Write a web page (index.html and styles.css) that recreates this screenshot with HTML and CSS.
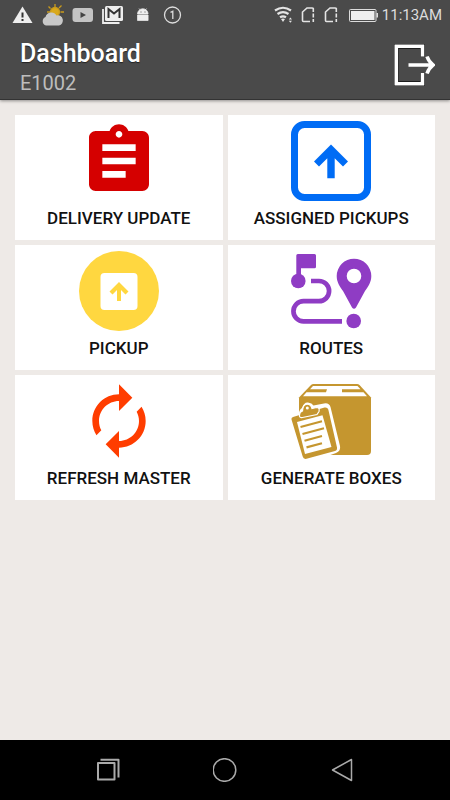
FILE: index.html
```
<!DOCTYPE html>
<html lang="en">
<head>
<meta charset="utf-8">
<meta name="viewport" content="width=device-width, initial-scale=1">
<title>Dashboard</title>
<link rel="stylesheet" href="styles.css">
</head>
<body>
<div class="screen">
  <header class="top">
    <div class="status">
      <div class="status-left">
        <svg class="note" viewBox="0 0 30 30" aria-hidden="true"><path d="M14.500 6.500L24.500 23h-20z" fill="#eee"/><path d="M13.500 12.500h2v5h-2zm0 6.500h2v2h-2z" fill="#333"/></svg>
        <svg class="note" viewBox="0 0 30 30" aria-hidden="true"><g stroke="#c99b1c" stroke-width="1.300"><circle cx="17" cy="12" r="4.500" fill="#d9a91c"/><path d="M17 4v3M10.500 6.500l2 2M23.500 5.500l-2.500 2.500M22.500 12H26M21 16l2.500 2M9 12h3"/></g><path d="M8 25.500a4.500 4.500 0 0 1-.5-8.500 6 6 0 0 1 11-1.500 5 5 0 0 1 2.500 10z" fill="#c8c8c8"/></svg>
        <svg class="note" viewBox="0 0 30 30" aria-hidden="true"><rect x="4.500" y="8" width="20.500" height="14" rx="3" fill="#c4c4c4"/><path d="M12.500 12v6l5.500-3z" fill="#444"/></svg>
        <svg class="note" viewBox="0 0 30 30" aria-hidden="true"><path d="M5 9v14h16.500" fill="none" stroke="#eee" stroke-width="1.800"/><rect x="7" y="6" width="18" height="15" rx="1.500" fill="#eee"/><path d="M10.500 18V9l5.500 4.500L21.500 9v9" fill="none" stroke="#333" stroke-width="2"/></svg>
        <svg class="note" viewBox="0 0 30 30" aria-hidden="true"><path d="M9.500 14a5.300 5.300 0 0 1 10.600 0zM9.500 15h10.600v5.500H9.500zM11 8.500l1.800 2M18.600 8.500l-1.800 2" fill="#eee" stroke="#eee" stroke-width=".7"/><path d="M12.500 12h1M16.500 12h1" stroke="#555"/></svg>
        <svg class="note" viewBox="0 0 30 30" aria-hidden="true"><circle cx="14.500" cy="15" r="8" fill="none" stroke="#ddd" stroke-width="1.300"/><path d="M12.500 12.300l2.300-1V19" fill="none" stroke="#ddd" stroke-width="1.300"/></svg>
      </div>
      <div class="status-right">
        <svg width="18" height="30" viewBox="0 0 18 30" aria-hidden="true"><g fill="none" stroke="#e4e4e4" stroke-width="2.200"><path d="M1 10.500Q9 5 17 10.500M3.500 14Q9 10.300 14.500 14M6 17.300Q9 15.500 12 17.300"/></g><path d="M7 19q2-1.200 4 0L9 22zM14.800 19.500l1.600-2 1.600 2zM14.800 20.800l1.600 2 1.600-2z" fill="#e4e4e4"/></svg>
        <svg width="14" height="30" viewBox="0 0 14 30" aria-hidden="true"><path d="M12.300 12V8.500Q12 8 11 8H6L1.500 12v8.500q0 1 1 1H9M12.300 13.500v4M12.300 19v3" fill="none" stroke="#e4e4e4" stroke-width="1.600"/></svg>
        <svg width="14" height="30" viewBox="0 0 14 30" aria-hidden="true"><path d="M12.300 12V8.500Q12 8 11 8H6L1.500 12v8.500q0 1 1 1H9M12.300 13.500v4M12.300 19v3" fill="none" stroke="#e4e4e4" stroke-width="1.600"/></svg>
        <svg width="32" height="30" viewBox="-2 0 32 30" aria-hidden="true"><rect x=".5" y="9.500" width="26.500" height="12" rx="1" fill="none" stroke="#ddd"/><rect x="2" y="11" width="23.500" height="9" fill="#eee"/><path d="M27.500 13h1.500v4.500h-1.500z" fill="#ddd"/></svg>
        <span class="time">11:13AM</span>
      </div>
    </div>
    <div class="bar">
      <div>
        <h1 class="title">Dashboard</h1>
        <p class="user">E1002</p>
      </div>
      <button class="logout" type="button" aria-label="Log out">
        <svg width="41" height="42" viewBox="1 1 41 42" aria-hidden="true">
          <path d="M29.500 13.500V3.300H3.300v37.400h26.200V30" fill="none" stroke="#111" stroke-width="5"/>
          <path d="M29.500 13.500V3.300H3.300v37.400h26.200V30M15.500 22H39M34 13.500q2 5.500 6 8.500-4 3-6 8.500" fill="none" stroke="#fff" stroke-width="3.600"/>
        </svg>
      </button>
    </div>
  </header>

  <main class="grid">
    <button class="card" type="button">
      <svg class="icon" viewBox="0 0 24 24" fill="#d50000" aria-hidden="true"><path d="M19 3h-4.180C14.400 1.840 13.300 1 12 1c-1.300 0-2.400.84-2.820 2H5c-1.100 0-2 .9-2 2v14c0 1.100.9 2 2 2h14c1.100 0 2-.9 2-2V5c0-1.100-.9-2-2-2zm-7 0c.55 0 1 .45 1 1s-.45 1-1 1-1-.45-1-1 .45-1 1-1zm2 14H7v-2h7v2zm3-4H7v-2h10v2zm0-4H7V7h10v2z"/></svg>
      <span>DELIVERY UPDATE</span>
    </button>
    <button class="card" type="button">
      <svg class="icon" viewBox="0 0 80 80" aria-hidden="true"><rect x="3.500" y="3.500" width="73" height="73" rx="10" fill="none" stroke="#006cf5" stroke-width="7"/><path d="M40 23.500L57 40.500 52 45.500 43.700 37.300V57.300H36.300V37.300L28 45.500 23 40.500z" fill="#006cf5"/></svg>
      <span>ASSIGNED PICKUPS</span>
    </button>
    <button class="card" type="button">
      <svg class="icon" viewBox="0 0 80 80" aria-hidden="true"><circle cx="40" cy="40" r="40" fill="#ffd740"/><rect x="21.500" y="22" width="37" height="37" rx="4" fill="#fff"/><path d="M40 31L49.500 40.500 46.500 43.500 42 39V50H38V39L33.500 43.500 30.500 40.500z" fill="#ffd740"/></svg>
      <span>PICKUP</span>
    </button>
    <button class="card" type="button">
      <svg class="icon" viewBox="0 0 80 80" fill="#8f3cc4" aria-hidden="true"><path d="M5.300 30V4.500Q5.300 3 6.800 3H23.500Q25 3 25 4.500V15.800Q25 17.300 23.500 17.300H10V30z"/><circle cx="7.300" cy="30" r="7.300"/><circle cx="62.700" cy="70" r="7.300"/><path d="M20 30H28A10 10 0 0 1 28 50.200H12.500A10 10 0 0 0 12.500 70.300H51" fill="none" stroke="#8f3cc4" stroke-width="4.700"/><path fill-rule="evenodd" d="M63 7.700A17.300 17.300 0 0 1 80.300 25C80.300 31 77.500 35 74 40L65 56.500Q63 59 61 56.500L52 40C48.500 35 45.700 31 45.700 25A17.300 17.300 0 0 1 63 7.700zM63 17.700A7.300 7.300 0 1 0 63 32.300 7.300 7.300 0 0 0 63 17.700z"/></svg>
      <span>ROUTES</span>
    </button>
    <button class="card" type="button">
      <svg class="icon" viewBox="0 0 24 24" fill="#ff3d00" aria-hidden="true"><path d="M12 6v3l4-4-4-4v3c-4.420 0-8 3.580-8 8 0 1.570.46 3.030 1.240 4.260L6.700 14.800c-.45-.83-.7-1.790-.7-2.800 0-3.310 2.690-6 6-6zm6.760 1.740L17.300 9.200c.44.840.7 1.790.7 2.800 0 3.310-2.690 6-6 6v-3l-4 4 4 4v-3c4.420 0 8-3.580 8-8 0-1.570-.46-3.030-1.240-4.260z"/></svg>
      <span>REFRESH MASTER</span>
    </button>
    <button class="card" type="button">
      <svg class="icon" viewBox="0 0 80 80" fill="#c5962f" aria-hidden="true">
        <path d="M8 16.500L20 4Q21 3 22.500 3H66Q67.500 3 68.500 4L80 16.500V70Q80 74 76 74H12Q8 74 8 70z"/>
        <path d="M22 5H66.500L69.500 8.300H51V11.300H72.500L76 15.200H12L15.500 11.300H35L36 8.300H19z" fill="#fff"/>
        <path d="M-1 38Q-1 35 2 34L8 32.500Q8 29 11 27 13 21 17 21.500 21 22 22.500 24.500L33 22.500Q38 21.500 39.500 26L49 65Q50 70 45 72L38 74.500 15 80 9 78z" fill="#fff"/>
        <path d="M.5 38.500Q0 36.500 2 36L33.500 26.500Q36.500 26 37.300 28.500L46 66.500Q46.500 69 44 70L15.500 77.800Q12.500 78.500 11.700 75.500z"/>
        <path d="M6 41L31.500 34.300 40.500 66 14 73z" fill="#fff"/>
        <path d="M8.500 34Q8.500 31 11.500 30 12 23.200 16 23.200 20 23.200 21 27.500L25.500 26.500Q29 26.500 28 30.500L26 33.500 11.500 36.500Q8 37 8.500 34z" stroke="#fff" stroke-width="1.200"/>
        <circle cx="16.300" cy="27" r="1.500" fill="#fff"/>
        <path d="M9.500 46L31 40.300M11.500 53L33 47.200M13.500 59.700L31 55M15.500 66.400L31 62.300" fill="none" stroke="#c5962f" stroke-width="2.200"/>
      </svg>
      <span>GENERATE BOXES</span>
    </button>
  </main>

  <nav class="nav" aria-label="System">
    <button type="button" aria-label="Recent apps"><svg viewBox="0 0 24 24" aria-hidden="true"><path d="M2 5h16.500v16.500H2zM4.500 1.800H22.500V19.500" stroke-width="2"/></svg></button>
    <button type="button" aria-label="Home"><svg viewBox="0 0 24 24" aria-hidden="true"><circle cx="11.500" cy="12" r="11.300"/></svg></button>
    <button type="button" aria-label="Back"><svg viewBox="0 0 24 24" aria-hidden="true"><path d="M2.500 12L21.500 1.500V22.500z"/></svg></button>
  </nav>
</div>
</body>
</html>
```
FILE: styles.css
```
* {
  box-sizing: border-box;
}

body {
  margin: 0;
  font-family: Roboto, "Liberation Sans", sans-serif;
  background: #eeeae7;
}

button {
  border: 0;
  padding: 0;
  background: none;
  font: inherit;
  color: inherit;
}

svg {
  display: block;
  flex: none;
}

.screen {
  min-height: 100vh;
  display: flex;
  flex-direction: column;
}

.top {
  background: #4a4a4a;
  border-bottom: 1px solid #333;
  box-shadow: 0 1px 3px #0006;
  padding-bottom: 4px;
}

.status {
  display: flex;
  justify-content: space-between;
  height: 30px;
  padding: 0 8px;
}

.status-left,
.status-right {
  display: flex;
  align-items: center;
}

.status-right {
  gap: 9px;
}

.note {
  width: 30px;
  height: 30px;
}

.time {
  margin-left: -6px;
  font-size: 15px;
  line-height: 32px;
  color: #ddd;
}

.bar {
  display: flex;
  justify-content: space-between;
  align-items: flex-start;
  padding: 8px 15px 0 20px;
}

.title {
  margin: 0;
  font-size: 25px;
  line-height: 32px;
  font-weight: 500;
  color: #fff;
  text-shadow: 0 1px 1px #222;
}

.user {
  margin: 0;
  padding-top: 1px;
  font-size: 20px;
  line-height: 24px;
  color: #bdbdbd;
}

.logout {
  margin-top: 6px;
}

.grid {
  flex: 1;
  display: grid;
  grid-template-columns: 1fr 1fr;
  gap: 5px;
  align-content: start;
  padding: 15px;
}

.card {
  display: flex;
  flex-direction: column;
  align-items: center;
  gap: 6px;
  padding: 6px 0 11px;
  background: #fff;
  font-size: 17px;
  line-height: 22px;
  font-weight: 500;
  color: #111;
}

.icon {
  width: 80px;
  height: 80px;
  overflow: visible;
}

.nav {
  display: flex;
  height: 60px;
  padding: 0 50px;
  background: #000;
}

.nav button {
  flex: 1;
  display: flex;
  align-items: center;
  justify-content: center;
}

.nav svg {
  width: 24px;
  height: 24px;
  fill: none;
  stroke: #aaa;
  stroke-width: 1.5;
  stroke-linejoin: round;
}
```
